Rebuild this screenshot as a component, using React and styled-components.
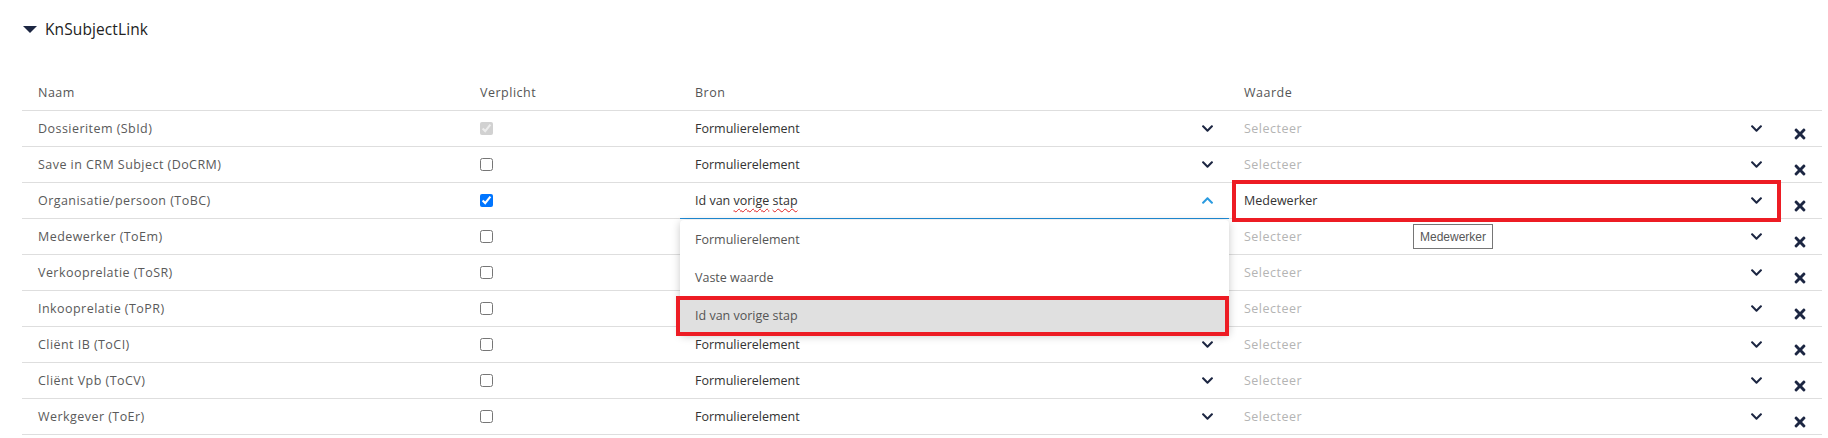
import React from "react";
import styled, { createGlobalStyle, css } from "styled-components";
import { FaChevronDown, FaChevronUp, FaTimes } from "react-icons/fa";

const GlobalStyle = createGlobalStyle`
  html, body { margin: 0; padding: 0; background: #ffffff; }
  body { font-family: "Open Sans", "Noto Sans", sans-serif; }
`;

const Page = styled.div`
  padding: 18px 6px 0 22px;
`;

const TitleRow = styled.div`
  display: flex;
  align-items: center;
  gap: 8px;
  height: 22px;
  padding-left: 1px;
`;

const Caret = styled.span`
  width: 0;
  height: 0;
  border-left: 7px solid transparent;
  border-right: 7px solid transparent;
  border-top: 7px solid #1c2642;
  margin-top: 1px;
`;

const Title = styled.span`
  font-size: 15.5px;
  color: #222;
  letter-spacing: 0.1px;
`;

const Table = styled.div`
  margin-top: 35px;
  position: relative;
`;

const cols = "442px 216px 549px 549px 44px";

const Row = styled.div`
  display: grid;
  grid-template-columns: ${cols};
  height: 36px;
  box-sizing: border-box;
  border-bottom: 1px solid #dedede;
  font-size: 12.5px;
`;

const HeadCell = styled.div`
  display: flex;
  align-items: center;
  padding-left: ${(p) => p.$pad || 16}px;
  color: #555;
  letter-spacing: 0.5px;
`;

const NameCell = styled.div`
  display: flex;
  align-items: center;
  padding-left: 16px;
  color: #5a5a5a;
  letter-spacing: 0.45px;
`;

const CheckCell = styled.div`
  display: flex;
  align-items: center;
  padding-left: 16px;
`;

const Check = styled.input.attrs({ type: "checkbox" })`
  margin: 0;
  width: 13px;
  height: 13px;
`;

const SelectCell = styled.div`
  position: relative;
  display: flex;
  align-items: center;
  justify-content: space-between;
  padding: 0 15px 0 15px;
  color: ${(p) => (p.$placeholder ? "#b4b4b4" : "#333")};
  letter-spacing: ${(p) => (p.$placeholder ? "0.5px" : "0")};
  ${(p) =>
    p.$active &&
    css`
      margin-bottom: -1px;
      border-bottom: 1px solid #1e8ad6;
      z-index: 2;
    `}
  ${(p) =>
    p.$marked &&
    css`
      &::after {
        content: "";
        position: absolute;
        top: -3px;
        bottom: -4px;
        left: 3px;
        right: -3px;
        border: 4px solid #ed1c24;
        pointer-events: none;
      }
    `}
`;

const Chevron = styled.span`
  display: flex;
  align-items: center;
  color: ${(p) => (p.$active ? "#2a9be0" : "#1c2642")};
`;

const RemoveCell = styled.div`
  display: flex;
  align-items: center;
  justify-content: center;
  padding-top: 10px;
  color: #1c2642;
`;

const Spell = styled.span`
  text-decoration: underline wavy #e02020;
  text-decoration-thickness: 1px;
  text-underline-offset: 3px;
`;

const Menu = styled.div`
  position: absolute;
  top: calc(100% + 2px);
  left: 0;
  right: 0;
  background: #fff;
  border-radius: 4px;
  box-shadow: 0 2px 8px rgba(0, 0, 0, 0.22);
  z-index: 20;
  letter-spacing: 0;
`;

const MenuItem = styled.div`
  position: relative;
  height: 38px;
  display: flex;
  align-items: center;
  padding-left: 15px;
  color: #555;
  background: ${(p) => (p.$selected ? "#e0e0e0" : "transparent")};
  ${(p) =>
    p.$marked &&
    css`
      &::after {
        content: "";
        position: absolute;
        top: 0;
        bottom: -2px;
        left: -4px;
        right: 0;
        border: 4px solid #ed1c24;
        pointer-events: none;
      }
    `}
`;

const Tooltip = styled.div`
  position: absolute;
  left: 184px;
  top: 41px;
  height: 25px;
  box-sizing: border-box;
  padding: 0 6px;
  display: flex;
  align-items: center;
  border: 1px solid #767676;
  background: #fff;
  color: #575757;
  font-family: "Liberation Sans", "DejaVu Sans", sans-serif;
  font-size: 12px;
  letter-spacing: 0;
  z-index: 30;
  white-space: nowrap;
`;

const rows = [
  { name: "Dossieritem (SbId)", check: "disabled" },
  { name: "Save in CRM Subject (DoCRM)", check: "off" },
  { name: "Organisatie/persoon (ToBC)", check: "on", open: true },
  { name: "Medewerker (ToEm)", check: "off" },
  { name: "Verkooprelatie (ToSR)", check: "off" },
  { name: "Inkooprelatie (ToPR)", check: "off" },
  { name: "Cliënt IB (ToCI)", check: "off" },
  { name: "Cliënt Vpb (ToCV)", check: "off" },
  { name: "Werkgever (ToEr)", check: "off" },
];

function Down() {
  return (
    <Chevron>
      <FaChevronDown size={13} />
    </Chevron>
  );
}

export default function App() {
  return (
    <>
      <GlobalStyle />
      <Page>
        <TitleRow>
          <Caret />
          <Title>KnSubjectLink</Title>
        </TitleRow>
        <Table>
          <Row>
            <HeadCell>Naam</HeadCell>
            <HeadCell>Verplicht</HeadCell>
            <HeadCell $pad={15}>Bron</HeadCell>
            <HeadCell $pad={15}>Waarde</HeadCell>
            <HeadCell />
          </Row>
          {rows.map((r) => (
            <Row key={r.name}>
              <NameCell>{r.name}</NameCell>
              <CheckCell>
                <Check
                  checked={r.check !== "off"}
                  disabled={r.check === "disabled"}
                  readOnly
                />
              </CheckCell>
              {r.open ? (
                <SelectCell $active>
                  <span>
                    Id van <Spell>vorige</Spell> <Spell>stap</Spell>
                  </span>
                  <Chevron $active>
                    <FaChevronUp size={13} />
                  </Chevron>
                  <Menu>
                    <MenuItem>Formulierelement</MenuItem>
                    <MenuItem>Vaste waarde</MenuItem>
                    <MenuItem $selected $marked>
                      Id van vorige stap
                    </MenuItem>
                  </Menu>
                </SelectCell>
              ) : (
                <SelectCell>
                  <span>Formulierelement</span>
                  <Down />
                </SelectCell>
              )}
              {r.open ? (
                <SelectCell $marked>
                  <span>Medewerker</span>
                  <Down />
                  <Tooltip>Medewerker</Tooltip>
                </SelectCell>
              ) : (
                <SelectCell $placeholder>
                  <span>Selecteer</span>
                  <Down />
                </SelectCell>
              )}
              <RemoveCell>
                <FaTimes size={16} />
              </RemoveCell>
            </Row>
          ))}
        </Table>
      </Page>
    </>
  );
}
